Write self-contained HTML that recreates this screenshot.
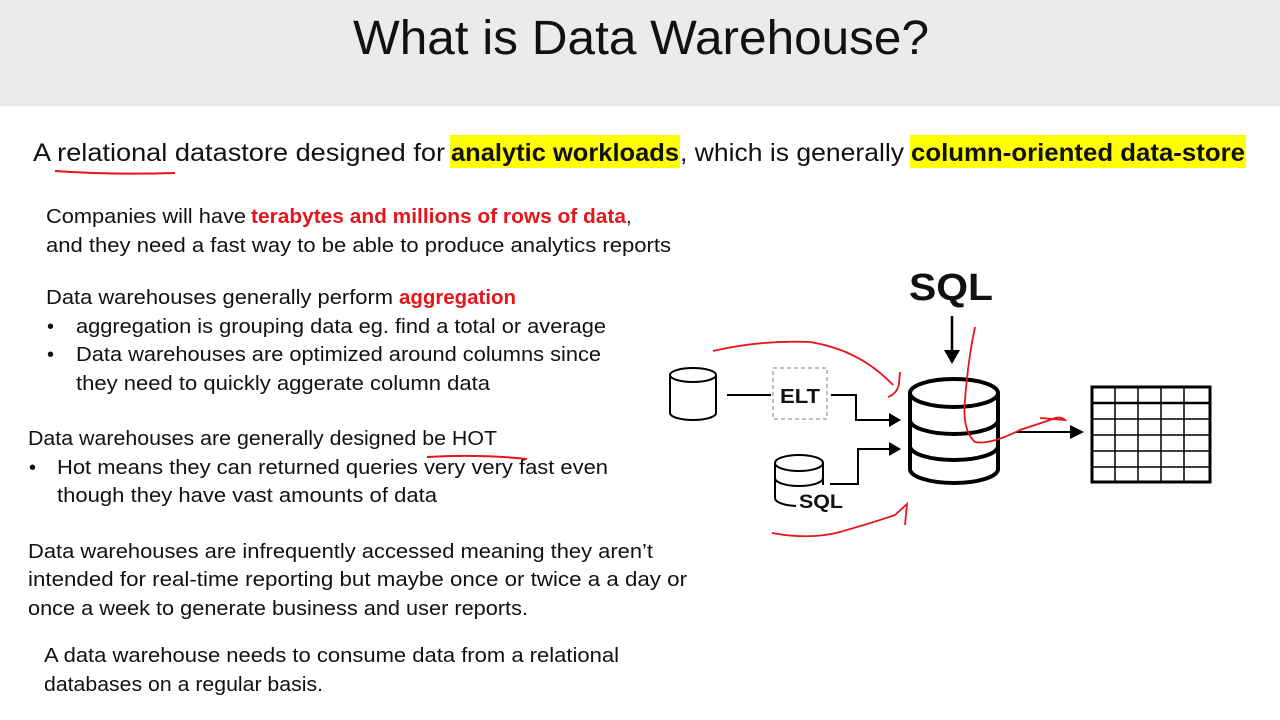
<!DOCTYPE html>
<html><head><meta charset="utf-8"><style>
html,body{margin:0;padding:0;background:#fff;}
svg{display:block}
text{font-family:"Liberation Sans",sans-serif;fill:#111;}
.b{font-size:20px}
.h{font-size:25px}
.bd{font-weight:bold}
.r{fill:#e8141b}
</style></head><body>
<svg width="1280" height="720" viewBox="0 0 1280 720" xmlns="http://www.w3.org/2000/svg">
<rect x="0" y="0" width="1280" height="106" fill="#ebebeb"/>
<text x="353" y="54" font-size="48" textLength="576" lengthAdjust="spacingAndGlyphs" style="font-family:'Liberation Sans',sans-serif">What is Data Warehouse?</text>

<rect x="450" y="135" width="230" height="33" fill="#ffff00"/>
<rect x="910" y="135" width="336" height="33" fill="#ffff00"/>
<text class="h" x="33" y="161" textLength="412" lengthAdjust="spacingAndGlyphs">A relational datastore designed for</text>
<text class="h bd" x="451" y="161" textLength="228" lengthAdjust="spacingAndGlyphs">analytic workloads</text>
<text class="h" x="680" y="161" textLength="224" lengthAdjust="spacingAndGlyphs">, which is generally</text>
<text class="h bd" x="911" y="161" textLength="334" lengthAdjust="spacingAndGlyphs">column-oriented data-store</text>

<text class="b" x="46" y="223" textLength="200" lengthAdjust="spacingAndGlyphs">Companies will have</text>
<text class="b bd r" x="251" y="223" textLength="375" lengthAdjust="spacingAndGlyphs">terabytes and millions of rows of data</text>
<text class="b" x="626" y="223">,</text>
<text class="b" x="46" y="252" textLength="625" lengthAdjust="spacingAndGlyphs">and they need a fast way to be able to produce analytics reports</text>

<text class="b" x="46" y="304" textLength="347" lengthAdjust="spacingAndGlyphs">Data warehouses generally perform</text>
<text class="b bd r" x="399" y="304" textLength="117" lengthAdjust="spacingAndGlyphs">aggregation</text>
<text class="b" x="47" y="333">•</text>
<text class="b" x="76" y="333" textLength="530" lengthAdjust="spacingAndGlyphs">aggregation is grouping data eg. find a total or average</text>
<text class="b" x="47" y="361">•</text>
<text class="b" x="76" y="361" textLength="525" lengthAdjust="spacingAndGlyphs">Data warehouses are optimized around columns since</text>
<text class="b" x="76" y="390" textLength="414" lengthAdjust="spacingAndGlyphs">they need to quickly aggerate column data</text>

<text class="b" x="28" y="445" textLength="469" lengthAdjust="spacingAndGlyphs">Data warehouses are generally designed be HOT</text>
<text class="b" x="29" y="474">•</text>
<text class="b" x="57" y="474" textLength="551" lengthAdjust="spacingAndGlyphs">Hot means they can returned queries very very fast even</text>
<text class="b" x="57" y="502" textLength="380" lengthAdjust="spacingAndGlyphs">though they have vast amounts of data</text>

<text class="b" x="28" y="558" textLength="625" lengthAdjust="spacingAndGlyphs">Data warehouses are infrequently accessed meaning they aren’t</text>
<text class="b" x="28" y="586" textLength="659" lengthAdjust="spacingAndGlyphs">intended for real-time reporting but maybe once or twice a a day or</text>
<text class="b" x="28" y="615" textLength="500" lengthAdjust="spacingAndGlyphs">once a week to generate business and user reports.</text>

<text class="b" x="44" y="662" textLength="575" lengthAdjust="spacingAndGlyphs">A data warehouse needs to consume data from a relational</text>
<text class="b" x="44" y="691" textLength="279" lengthAdjust="spacingAndGlyphs">databases on a regular basis.</text>

<!-- red annotations -->
<path d="M55 171 Q110 175 175 173" stroke="#e8141b" stroke-width="2" fill="none"/>
<path d="M427 457 Q480 454 527 459" stroke="#e8141b" stroke-width="2" fill="none"/>

<!-- diagram -->
<text x="909" y="300" font-size="38" font-weight="bold" textLength="84" lengthAdjust="spacingAndGlyphs">SQL</text>
<g stroke="#000" stroke-width="2.5" fill="none">
<line x1="952" y1="316" x2="952" y2="352"/>
</g>
<polygon points="944,350 960,350 952,364" fill="#000"/>

<!-- small cylinder -->
<g stroke="#000" stroke-width="2" fill="#fff">
<path d="M670 375 L670 413 A23 7 0 0 0 716 413 L716 375"/>
<ellipse cx="693" cy="375" rx="23" ry="7"/>
</g>
<line x1="727" y1="395" x2="771" y2="395" stroke="#000" stroke-width="2"/>
<rect x="773" y="368" width="54" height="51" fill="none" stroke="#aaa" stroke-width="1.5" stroke-dasharray="4,3"/>
<text x="780" y="403" font-size="20" font-weight="bold" textLength="40" lengthAdjust="spacingAndGlyphs">ELT</text>
<path d="M831 395 L856 395 L856 420 L892 420" stroke="#000" stroke-width="2" fill="none"/>
<polygon points="889,413 901,420 889,427" fill="#000"/>

<!-- SQL cylinder -->
<g stroke="#000" stroke-width="2" fill="none">
<ellipse cx="799" cy="463" rx="24" ry="8"/>
<path d="M775 463 L775 478 A24 8 0 0 0 823 478 L823 463"/>
<path d="M775 478 L775 498 A24 8 0 0 0 796 506"/>
<path d="M823 478 L823 485"/>
</g>
<text x="799" y="508" font-size="19" font-weight="bold" textLength="44" lengthAdjust="spacingAndGlyphs">SQL</text>
<path d="M830 484 L858 484 L858 449 L892 449" stroke="#000" stroke-width="2" fill="none"/>
<polygon points="889,442 901,449 889,456" fill="#000"/>

<!-- big cylinder -->
<g stroke="#000" stroke-width="4" fill="#fff">
<path d="M910 393 L910 469 A44 14 0 0 0 998 469 L998 393"/>
<path d="M910 420 A44 14 0 0 0 998 420" fill="none"/>
<path d="M910 446 A44 14 0 0 0 998 446" fill="none"/>
<ellipse cx="954" cy="393" rx="44" ry="14"/>
</g>

<line x1="1016" y1="432" x2="1072" y2="432" stroke="#000" stroke-width="2"/>
<polygon points="1070,425 1084,432 1070,439" fill="#000"/>

<!-- table -->
<rect x="1092" y="387" width="118" height="95" fill="none" stroke="#000" stroke-width="3"/>
<g stroke="#000" stroke-width="1.5">
<line x1="1092" y1="403" x2="1210" y2="403" stroke-width="2.5"/>
<line x1="1092" y1="419" x2="1210" y2="419"/>
<line x1="1092" y1="435" x2="1210" y2="435"/>
<line x1="1092" y1="451" x2="1210" y2="451"/>
<line x1="1092" y1="467" x2="1210" y2="467"/>
<line x1="1115" y1="387" x2="1115" y2="482"/>
<line x1="1138" y1="387" x2="1138" y2="482"/>
<line x1="1161" y1="387" x2="1161" y2="482"/>
<line x1="1184" y1="387" x2="1184" y2="482"/>
</g>

<!-- red pen -->
<g stroke="#e8141b" stroke-width="1.8" fill="none">
<path d="M713 351 Q760 340 810 342 Q860 350 893 385"/>
<path d="M888 397 Q898 393 899 383 L900 372"/>
<path d="M975 327 Q968 360 965 400 Q962 430 975 442 Q990 445 1020 430 Q1035 425 1050 420 Q1060 415 1065 420 L1040 418"/>
<path d="M772 533 Q810 540 840 532 Q875 522 895 515 L907 504 L905 525"/>
</g>
</svg>
</body></html>
